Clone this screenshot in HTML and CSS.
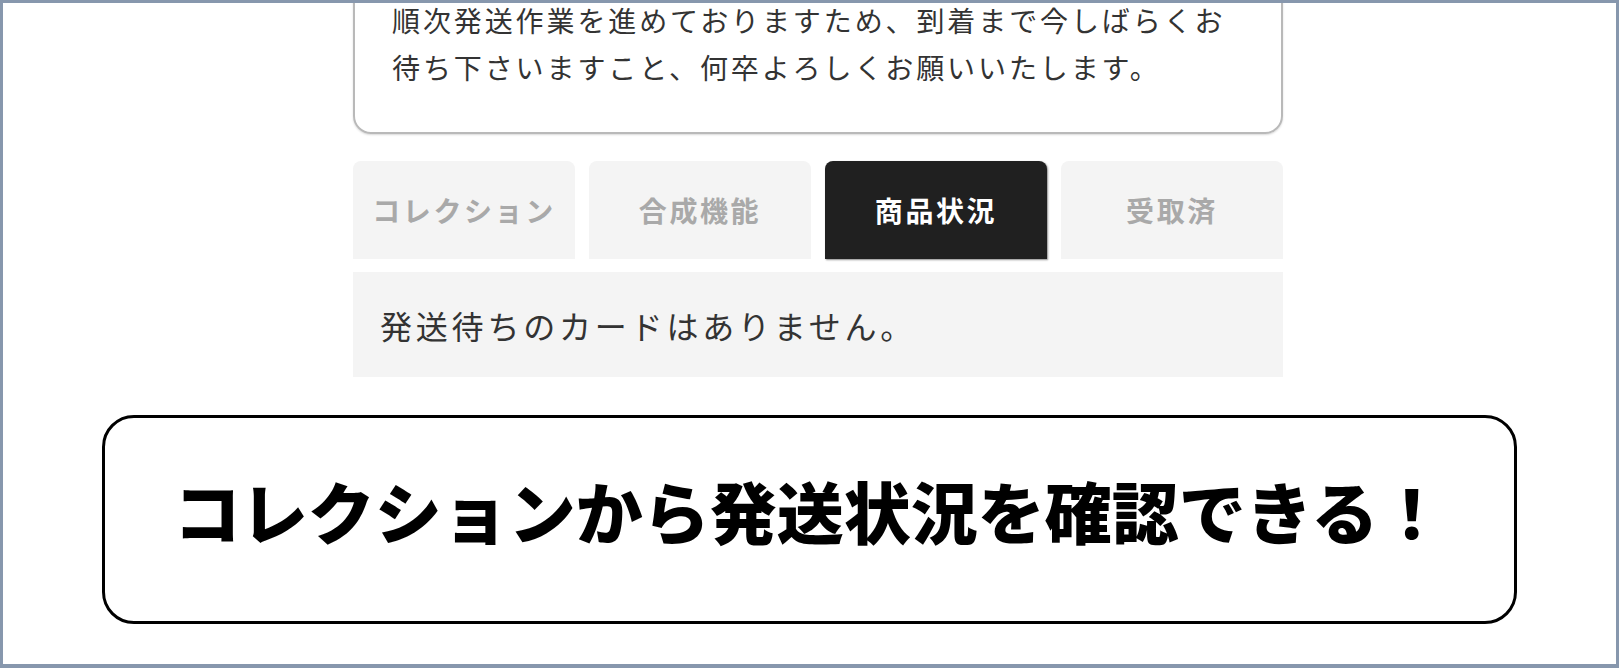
FILE: index.html
```html
<!DOCTYPE html>
<html lang="ja">
<head>
    <meta charset="UTF-8">
    <meta name="viewport" content="width=device-width, initial-scale=1">
    <title>コレクション</title>
    <link rel="stylesheet" href="styles.css">
</head>
<body>
    <div class="frame">
        <div class="page">
            <div class="wrap">
                <div class="notice">
                    <p>順次発送作業を進めておりますため、到着まで今しばらくお<br>待ち下さいますこと、何卒よろしくお願いいたします。</p>
                </div>
                <ul class="tabs">
                    <li class="tab">コレクション</li>
                    <li class="tab">合成機能</li>
                    <li class="tab active">商品状況</li>
                    <li class="tab">受取済</li>
                </ul>
                <div class="panel">発送待ちのカードはありません。</div>
            </div>
            <div class="callout">コレクションから発送状況を確認できる！</div>
        </div>
    </div>
</body>
</html>
```

FILE: styles.css
```css
*, *:before, *:after {
    margin: 0;
    padding: 0;
    box-sizing: border-box;
}
body {
    font-family: "Noto Sans CJK JP", "Noto Sans", sans-serif;
    color: #333;
    background: #fff;
}
.frame {
    width: 1619px;
    height: 668px;
    border: 3px solid #8797ad;
    border-bottom-width: 4px;
    overflow: hidden;
    background: #fff;
}
.page {
    display: flex;
    flex-direction: column;
}
.wrap {
    width: 930px;
    margin-left: 350px;
}
.notice {
    margin-top: -44px;
    padding: 36px 30px 41px 37px;
    border: 2px solid #b9b9b9;
    border-radius: 18px;
    box-shadow: 0 1px 2px rgba(0, 0, 0, 0.15);
}
.notice p {
    font-size: 28px;
    line-height: 47px;
    letter-spacing: 2.9px;
    color: #333;
}
.tabs {
    list-style: none;
    display: grid;
    grid-template-columns: repeat(4, 1fr);
    gap: 14px;
    margin-top: 27px;
}
.tab {
    height: 98px;
    display: flex;
    align-items: center;
    justify-content: center;
    background: #f4f4f4;
    border-radius: 8px 8px 0 0;
    font-size: 28px;
    font-weight: 700;
    letter-spacing: 2.6px;
    color: #a9a9a9;
}
.tab.active {
    background: #202020;
    color: #fff;
    box-shadow: 1px 1px 2px rgba(0, 0, 0, 0.45);
}
.panel {
    margin-top: 13px;
    height: 105px;
    display: flex;
    align-items: center;
    padding-left: 27px;
    background: #f4f4f4;
    font-size: 32px;
    letter-spacing: 3.8px;
    color: #333;
}
.callout {
    width: 1415px;
    height: 209px;
    margin: 38px auto 0;
    border: 3px solid #000;
    border-radius: 32px;
    display: flex;
    align-items: center;
    justify-content: center;
    padding-bottom: 20px;
    font-size: 67px;
    font-weight: 900;
    color: #000;
}
```
